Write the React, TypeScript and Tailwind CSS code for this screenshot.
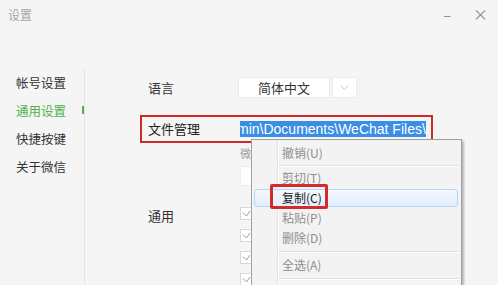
import React from "react"

const cjk = { fontFamily: '"Noto Sans CJK SC", "Noto Sans", sans-serif' }

const navItems = [
  { label: "帐号设置", active: false },
  { label: "通用设置", active: true },
  { label: "快捷按键", active: false },
  { label: "关于微信", active: false },
]

function Check() {
  return (
    <div className="w-[13px] h-[13px] bg-white border border-[#d8d8d8] flex items-center justify-center">
      <svg width="9" height="7" viewBox="0 0 9 7" fill="none">
        <path d="M1 2.5 L4.5 6 L8 1" stroke="#9a9a9a" strokeWidth="1" />
      </svg>
    </div>
  )
}

function MenuItem({ label, disabled = true, hover = false }: { label: string; disabled?: boolean; hover?: boolean }) {
  return (
    <div className="relative h-[20px] flex items-center">
      {hover && (
        <div className="absolute left-[2px] right-[3px] top-[1px] bottom-[1px] rounded-[3px] border border-[#b8d6fb] bg-gradient-to-b from-[#f4f8fe] to-[#e3eefb]" />
      )}
      <span
        className={`relative pl-[30px] text-[12px] leading-none ${disabled ? "text-[#8e8e8e]" : "text-[#1a1a1a]"}`}
      >
        {label}
      </span>
    </div>
  )
}

function Separator({ h }: { h: string }) {
  return (
    <div className={`${h} flex items-center pl-[27px] pr-[2px]`}>
      <div className="w-full border-t border-[#e0e0e0] border-b border-b-white" />
    </div>
  )
}

export default function App() {
  return (
    <div className="relative w-[498px] h-[285px] overflow-hidden bg-[#f5f5f5] text-[#222]" style={cjk}>
      {/* Title bar */}
      <div className="h-[69px] flex items-start justify-between">
        <div className="pl-[8px] pt-[6px] text-[12px] text-[#a5a5a5]">设置</div>
        <div className="flex items-center gap-[22px] pt-[3px] pr-[10px] text-[#8a8a8a]">
          <span className="text-[14px]">–</span>
          <span className="text-[15px]">×</span>
        </div>
      </div>

      <div className="flex h-[216px]">
        {/* Sidebar */}
        <div className="relative w-[85px] border-r border-[#e3e3e3]">
          {navItems.map((item) => (
            <div
              key={item.label}
              className={`h-[28px] flex items-center pl-[16px] text-[12.5px] ${item.active ? "text-[#4cb34c]" : "text-[#333]"}`}
            >
              {item.label}
            </div>
          ))}
          <div className="absolute right-[0px] top-[37px] w-[2px] h-[8px] bg-[#4cb34c]" />
        </div>

        {/* Content */}
        <div className="flex-1 pt-[8px]">
          <div className="flex items-center h-[21px] pl-[63px]">
            <div className="w-[90px] text-[13px] text-[#333]">语言</div>
            <div className="flex gap-[2px]">
              <div className="w-[92px] h-[21px] bg-white border border-[#ececec] flex items-center justify-center text-[13px] text-[#333]">
                简体中文
              </div>
              <div className="w-[25px] h-[21px] bg-white border border-[#ececec] flex items-center justify-center">
                <svg width="9" height="5" viewBox="0 0 9 5" fill="none">
                  <path d="M0.5 0.5 L4.5 4.5 L8.5 0.5" stroke="#c8c8c8" />
                </svg>
              </div>
            </div>
          </div>

          <div className="mt-[17px] ml-[55px] w-[293px] h-[28px] border-2 border-[#cf2a2a] flex items-center pl-[6px]">
            <div className="w-[92px] text-[13px] text-[#222]">文件管理</div>
            <div className="h-[16px] w-[186px] bg-[#3a8ee6] overflow-hidden flex items-center">
              <span
                className="text-[14px] leading-none text-white whitespace-nowrap -ml-[3px]"
                style={{ fontFamily: '"Liberation Sans", Arial, sans-serif' }}
              >
                min\Documents\WeChat Files\
              </span>
            </div>
          </div>

          <div className="ml-[155px] mt-[3px] w-[11px] overflow-hidden text-[11px] text-[#9a9a9a] leading-[14px] whitespace-nowrap">
            微信文件的默认保存位置
          </div>
          <div className="ml-[155px] mt-[6px] w-[60px] h-[20px] bg-white border border-[#ececec]" />

          <div className="flex pl-[63px] mt-[20px]">
            <div className="w-[92px] text-[13px] text-[#333]">通用</div>
            <div className="flex flex-col gap-[9px] pt-[1px]">
              <Check />
              <Check />
              <Check />
              <Check />
            </div>
          </div>
        </div>
      </div>

      {/* Context menu */}
      <div className="absolute left-[251px] top-[139px] w-[211px] h-[160px] bg-[#f3f3f3] border border-[#a0a0a0] shadow-[2px_2px_2px_rgba(0,0,0,0.25)] pt-[3px]">
        <div className="absolute left-[25px] top-0 bottom-0 w-[2px] border-l border-[#e2e2e2] border-r border-r-white" />
        <MenuItem label="撤销(U)" />
        <Separator h="h-[5px]" />
        <MenuItem label="剪切(T)" />
        <MenuItem label="复制(C)" disabled={false} hover />
        <MenuItem label="粘贴(P)" />
        <MenuItem label="删除(D)" />
        <Separator h="h-[7px]" />
        <MenuItem label="全选(A)" />
        <Separator h="h-[7px]" />

        <div className="absolute left-[18px] top-[44px] w-[58px] h-[25px] border-[3px] border-[#d42a2a] rounded-[2px]" />
      </div>
    </div>
  )
}
